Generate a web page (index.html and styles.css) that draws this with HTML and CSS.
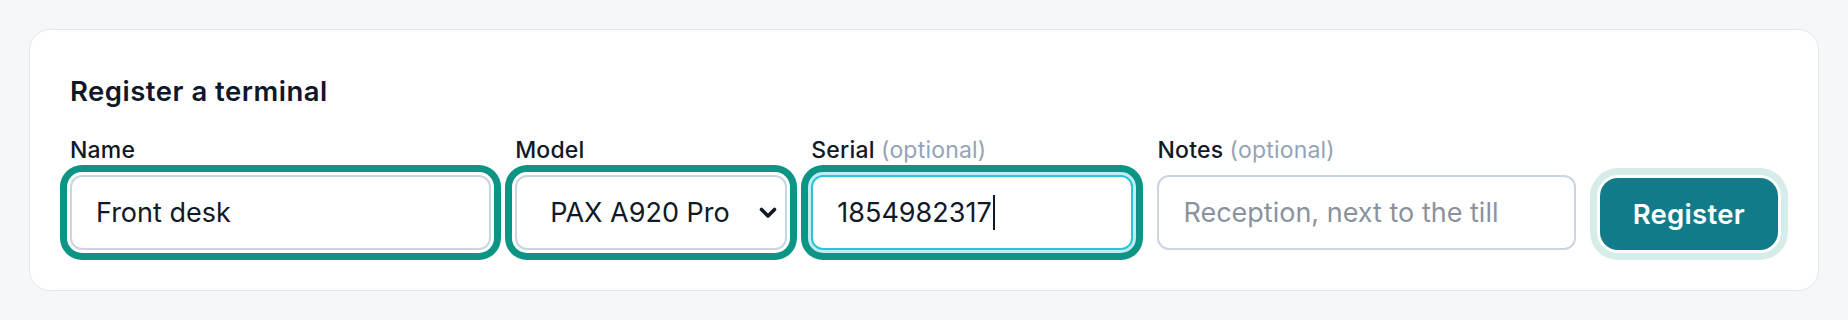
FILE: index.html
```html
<!DOCTYPE html>
<html lang="en">
<head>
<meta charset="utf-8">
<title>Register a terminal</title>
<link rel="stylesheet" href="styles.css">
</head>
<body>
<main class="page">
  <section class="card">
    <h2 class="card-title">Register a terminal</h2>
    <form class="row" onsubmit="return false">
      <div class="field">
        <label class="label" for="name">Name</label>
        <input class="control ringed" id="name" type="text" value="Front desk">
      </div>
      <div class="field">
        <label class="label" for="model">Model</label>
        <select class="control select ringed" id="model">
          <option>PAX A920 Pro</option>
          <option>PAX A80</option>
          <option>Ingenico Move 5000</option>
        </select>
      </div>
      <div class="field">
        <label class="label" for="serial">Serial <span class="optional">(optional)</span></label>
        <div class="control-wrap">
          <input class="control ringed focused" id="serial" type="text" value="1854982317">
          <span class="caret" aria-hidden="true"></span>
        </div>
      </div>
      <div class="field">
        <label class="label" for="notes">Notes <span class="optional">(optional)</span></label>
        <input class="control" id="notes" type="text" placeholder="Reception, next to the till">
      </div>
      <button class="btn" type="submit">Register</button>
    </form>
  </section>
</main>
</body>
</html>
```

FILE: styles.css
```css
* {
  box-sizing: border-box;
}

html, body {
  margin: 0;
  padding: 0;
}

body {
  background: #f6f7f9;
  font-family: Inter, "Noto Sans", "Liberation Sans", sans-serif;
  color: #111827;
}

.page {
  padding: 29px;
}

.card {
  background: #ffffff;
  border: 1.5px solid #e2e8f0;
  border-radius: 21px;
  padding: 41px 40px 40px;
}

.card-title {
  margin: 0 0 23px;
  font-size: 27.5px;
  line-height: 40px;
  font-weight: 600;
  color: #0f172a;
  letter-spacing: 0.5px;
}

.row {
  display: grid;
  grid-template-columns: 421fr 272fr 322fr 418fr auto;
  column-gap: 24px;
  align-items: end;
}

.field {
  display: flex;
  flex-direction: column;
  min-width: 0;
}

.label {
  font-size: 23px;
  line-height: 33px;
  font-weight: 500;
  color: #111827;
  letter-spacing: 0.2px;
  margin-bottom: 8px;
}

.optional {
  font-weight: 400;
  color: #94a3b8;
}

.control-wrap {
  position: relative;
}

.control {
  width: 100%;
  height: 75px;
  border: 2px solid #cbd5e1;
  border-radius: 12px;
  background: #ffffff;
  padding: 0 24px;
  font-family: inherit;
  font-size: 27px;
  color: #111827;
  caret-color: transparent;
  outline: none;
}

.control::placeholder {
  color: #8b929e;
  opacity: 1;
}

.ringed {
  box-shadow: 0 0 0 3px #ffffff, 0 0 0 10px #0e9484;
}

.ringed.focused {
  border-color: #2ec4d6;
  box-shadow: 0 0 0 3px #c0edf3, 0 0 0 10px #0e9484;
}

.caret {
  position: absolute;
  left: 182px;
  top: 20px;
  width: 2px;
  height: 35px;
  background: #111827;
}

.select {
  appearance: none;
  -webkit-appearance: none;
  padding-left: 33px;
  padding-right: 40px;
  background-image: url("data:image/svg+xml,%3Csvg xmlns='http://www.w3.org/2000/svg' width='18' height='12' viewBox='0 0 18 12'%3E%3Cpath d='M2.5 2.5 L9 9 L15.5 2.5' fill='none' stroke='%23111827' stroke-width='3.6' stroke-linecap='round' stroke-linejoin='round'/%3E%3C/svg%3E");
  background-repeat: no-repeat;
  background-position: right 8px center;
  background-size: 18px 12px;
}

.btn {
  height: 72px;
  padding: 0 33px;
  border: none;
  border-radius: 18px;
  background: #117b8a;
  color: #ffffff;
  font-family: inherit;
  font-size: 27.5px;
  font-weight: 600;
  letter-spacing: 0.3px;
  box-shadow: 0 0 0 3px #ffffff, 0 0 0 10px #d5ece9;
  cursor: pointer;
}
```
